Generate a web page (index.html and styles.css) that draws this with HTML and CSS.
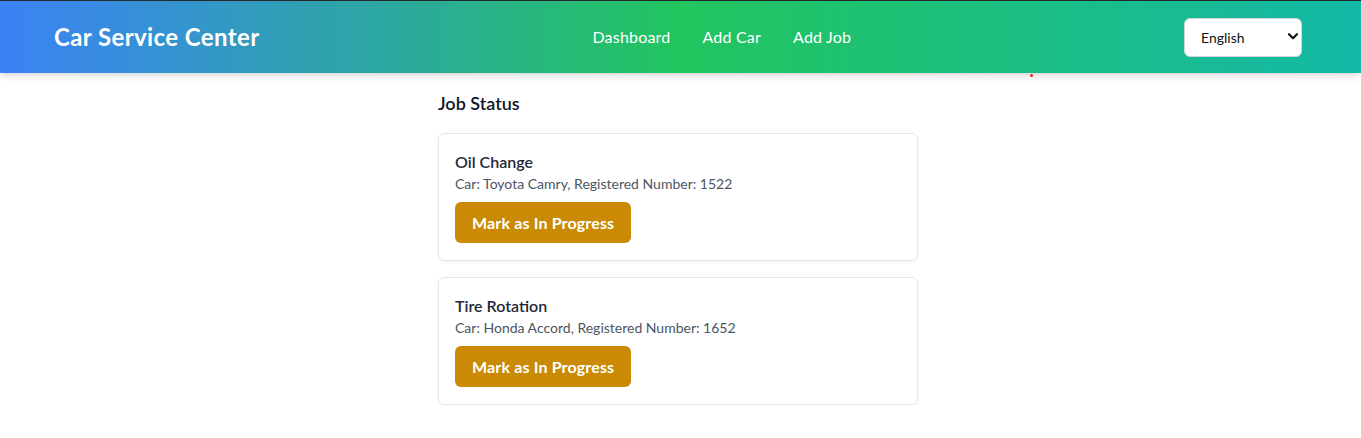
FILE: index.html
```html
<!DOCTYPE html>
<html lang="en">
<head>
<meta charset="utf-8">
<title>Car Service Center</title>
<link rel="stylesheet" href="styles.css">
</head>
<body>
<header class="topbar">
  <div class="brand">Car Service Center</div>
  <nav class="nav">
    <a href="#" class="nav-link">Dashboard</a>
    <a href="#" class="nav-link">Add Car</a>
    <a href="#" class="nav-link">Add Job</a>
  </nav>
  <div class="lang">
    <select class="lang-select">
      <option>English</option>
    </select>
    <svg class="chev" width="10" height="7" viewBox="0 0 10 7"><path d="M1 1.2 L5 5.2 L9 1.2" fill="none" stroke="#111" stroke-width="2.2" stroke-linecap="round" stroke-linejoin="round"/></svg>
  </div>
  <span class="dot"></span>
</header>
<main class="page">
  <section class="jobs">
    <h2 class="jobs-title">Job Status</h2>
    <div class="card">
      <h3 class="card-title">Oil Change</h3>
      <p class="card-meta">Car: Toyota Camry, Registered Number: 1522</p>
      <button class="btn">Mark as In Progress</button>
    </div>
    <div class="card">
      <h3 class="card-title">Tire Rotation</h3>
      <p class="card-meta">Car: Honda Accord, Registered Number: 1652</p>
      <button class="btn">Mark as In Progress</button>
    </div>
  </section>
</main>
</body>
</html>
```
FILE: styles.css
```css
* { box-sizing: border-box; }
html, body { margin: 0; padding: 0; background: #fff; }
body { font-family: Lato, "Noto Sans", sans-serif; color: #1f2937; }

.topbar {
  position: relative;
  display: flex;
  align-items: center;
  justify-content: space-between;
  height: 73px;
  padding: 0 59px 0 54px;
  border-top: 1px solid #26292c;
  background: linear-gradient(to right, #3b82f6, #22c55e, #14b8a6);
  box-shadow: 0 4px 8px -1px rgba(0,0,0,0.12), 0 2px 4px -2px rgba(0,0,0,0.1);
  z-index: 1;
}
.brand {
  color: #fff;
  font-size: 24px;
  font-weight: 700;
  line-height: 32px;
  letter-spacing: 0.4px;
}
.nav { display: flex; gap: 32px; }
.nav-link {
  color: #fff;
  text-decoration: none;
  font-size: 16px;
  line-height: 24px;
  letter-spacing: 0.2px;
}
.lang { position: relative; display: flex; margin-top: 1px; }
.lang-select {
  appearance: none;
  -webkit-appearance: none;
  width: 118px;
  height: 39px;
  padding: 0 0 0 16px;
  border: 1px solid #d1d5db;
  border-radius: 6px;
  background: #fff;
  color: #111;
  font-family: Lato, "Noto Sans", sans-serif;
  font-size: 14px;
}
.chev { position: absolute; right: 4px; top: 15px; pointer-events: none; }
.dot {
  position: absolute;
  left: 1030px;
  top: 73px;
  width: 3px;
  height: 3px;
  border-radius: 50%;
  background: #ef1c1c;
}

.page { display: flex; justify-content: center; padding: 16px 5px 0 0; }
.jobs { width: 480px; display: flex; flex-direction: column; gap: 16px; }
.jobs-title {
  margin: 0;
  font-size: 18px;
  line-height: 28px;
  font-weight: 600;
  color: #111827;
}
.card {
  border: 1px solid #e5e7eb;
  border-radius: 6px;
  padding: 16px 16px 17px;
  background: #fff;
  box-shadow: 0 1px 3px rgba(0,0,0,0.06);
  display: flex;
  flex-direction: column;
  align-items: flex-start;
}
.card-title {
  margin: 0;
  font-size: 16px;
  line-height: 24px;
  font-weight: 600;
  color: #1f2937;
}
.card-meta {
  margin: 0;
  font-size: 14px;
  line-height: 20px;
  color: #4b5563;
}
.btn {
  margin-top: 8px;
  height: 41px;
  padding: 0 17px;
  border: none;
  border-radius: 6px;
  background: #ca8a04;
  color: #fff;
  font-family: Lato, "Noto Sans", sans-serif;
  font-size: 16px;
  font-weight: 700;
  letter-spacing: 0.15px;
}
```
